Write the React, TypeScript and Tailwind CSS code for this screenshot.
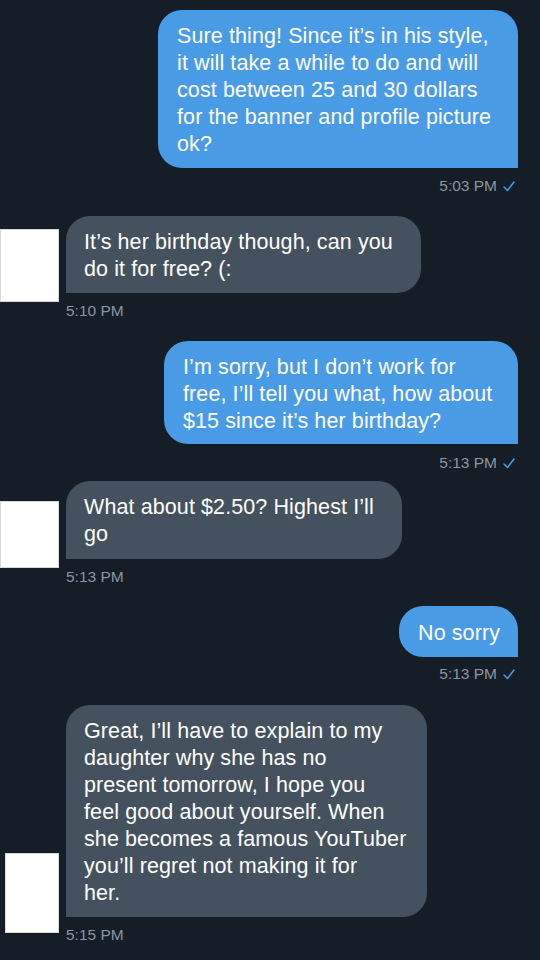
import React from "react";

const font = { fontFamily: '"Liberation Sans", Arial, sans-serif' };

function Check() {
  return (
    <svg width="12" height="11" viewBox="0 0 12 11" className="ml-[6px]">
      <polyline points="1,6 4.5,9.5 11,1" fill="none" stroke="#4a9be6" strokeWidth="1.5" strokeLinecap="round" strokeLinejoin="round" />
    </svg>
  );
}

function Sent({ lines, width, time, mt, tsMt, h }: { lines: string[]; width: number; time: string; mt: string; tsMt: string; h: number }) {
  return (
    <div className={`flex flex-col items-end pr-[22px] ${mt}`}>
      <div
        className="bg-[#4a9be6] text-white text-[21.5px] tracking-[0.1px] leading-[27px] rounded-[24px] rounded-br-none pl-[19px] pt-[3px] flex flex-col justify-center"
        style={{ width, height: h }}
      >
        {lines.map((l, i) => (
          <div key={i} className="whitespace-nowrap">{l}</div>
        ))}
      </div>
      <div className={`flex items-center h-[20px] text-[15.5px] text-[#8a96a3] pr-[3px] ${tsMt}`}>
        {time}
        <Check />
      </div>
    </div>
  );
}

function Received({ lines, width, time, mt, tsMt, h, avatar }: { lines: string[]; width: number; time: string; mt: string; tsMt: string; h: number; avatar: React.ReactNode }) {
  return (
    <div className={`flex items-start ${mt}`}>
      {avatar}
      <div className="flex flex-col items-start">
        <div
          className="bg-[#445260] text-white text-[21.5px] tracking-[0.1px] leading-[27px] rounded-[24px] rounded-bl-none pl-[18px] pt-[2px] flex flex-col justify-center"
          style={{ width, height: h }}
        >
          {lines.map((l, i) => (
            <div key={i} className="whitespace-nowrap">{l}</div>
          ))}
        </div>
        <div className={`flex items-center h-[20px] text-[15.5px] text-[#8a96a3] ${tsMt}`}>{time}</div>
      </div>
    </div>
  );
}

export default function App() {
  return (
    <div className="w-[540px] h-[960px] overflow-hidden bg-[#151d27] flex flex-col" style={font}>
      <Sent
        mt="mt-[10px]"
        width={360}
        h={158}
        tsMt="mt-[8px]"
        time="5:03 PM"
        lines={[
          "Sure thing! Since it’s in his style,",
          "it will take a while to do and will",
          "cost between 25 and 30 dollars",
          "for the banner and profile picture",
          "ok?",
        ]}
      />
      <Received
        mt="mt-[20px]"
        width={355}
        h={77}
        tsMt="mt-[8px]"
        time="5:10 PM"
        avatar={<div className="w-[59px] h-[73px] mt-[13px] mr-[7px] bg-white border border-[#d8d8d8] shrink-0" />}
        lines={["It’s her birthday though, can you", "do it for free? (:"]}
      />
      <Sent
        mt="mt-[20px]"
        width={354}
        h={103}
        tsMt="mt-[9px]"
        time="5:13 PM"
        lines={[
          "I’m sorry, but I don’t work for",
          "free, I’ll tell you what, how about",
          "$15 since it’s her birthday?",
        ]}
      />
      <Received
        mt="mt-[8px]"
        width={336}
        h={78}
        tsMt="mt-[8px]"
        time="5:13 PM"
        avatar={<div className="w-[59px] h-[67px] mt-[20px] mr-[7px] bg-white border border-[#d8d8d8] shrink-0" />}
        lines={["What about $2.50? Highest I’ll", "go"]}
      />
      <Sent
        mt="mt-[19px]"
        width={119}
        h={51}
        tsMt="mt-[7px]"
        time="5:13 PM"
        lines={["No sorry"]}
      />
      <Received
        mt="mt-[21px]"
        width={361}
        h={212}
        tsMt="mt-[8px]"
        time="5:15 PM"
        avatar={<div className="w-[54px] h-[80px] mt-[148px] ml-[5px] mr-[7px] bg-white border border-[#d8d8d8] shrink-0" />}
        lines={[
          "Great, I’ll have to explain to my",
          "daughter why she has no",
          "present tomorrow, I hope you",
          "feel good about yourself. When",
          "she becomes a famous YouTuber",
          "you’ll regret not making it for",
          "her.",
        ]}
      />
    </div>
  );
}
